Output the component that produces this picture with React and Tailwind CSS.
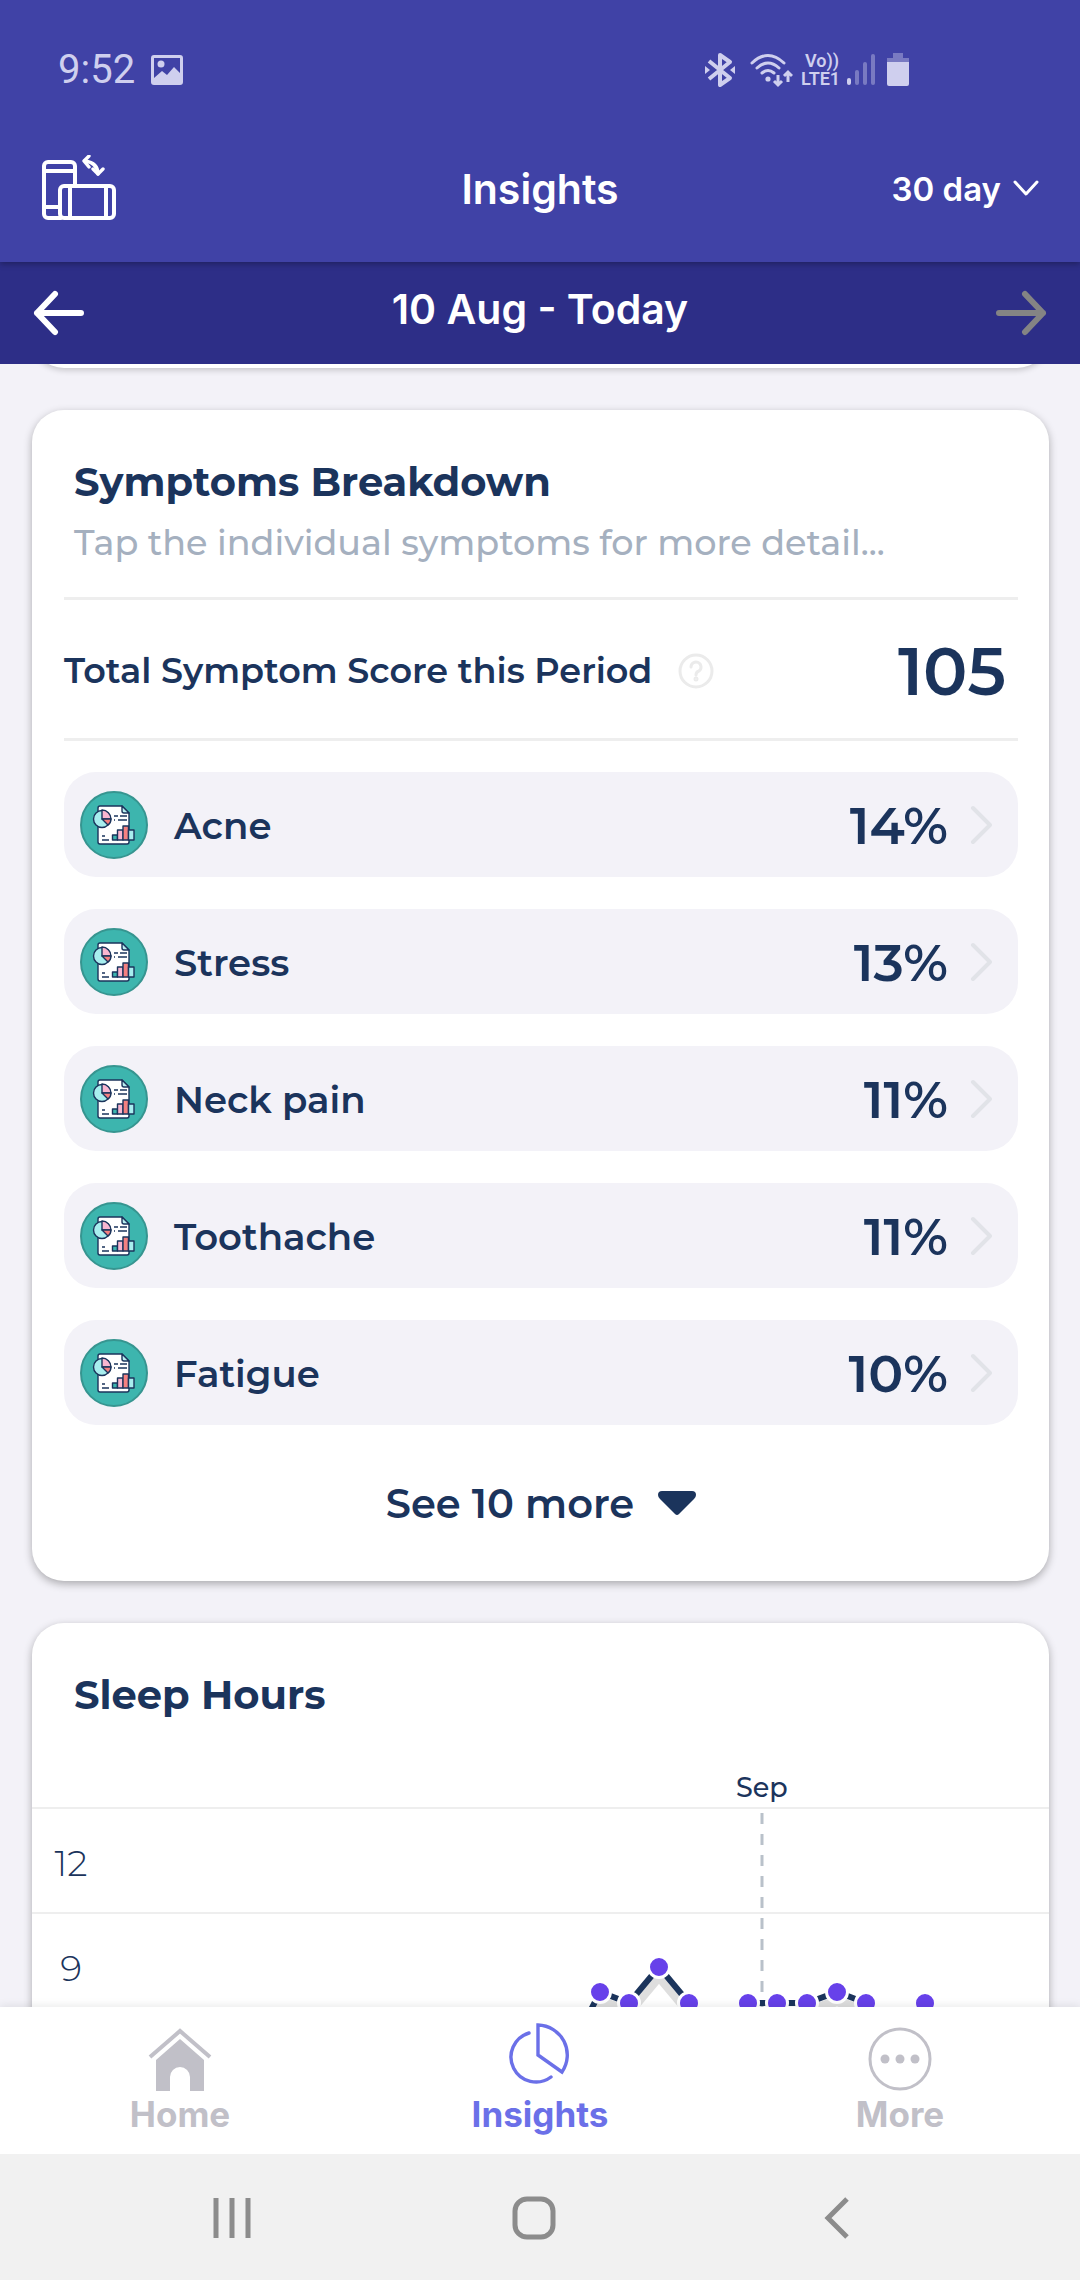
/**
 * Insights screen - symptom breakdown and sleep chart for the selected period
 */

const SYMPTOMS = [
  { name: "Acne", share: 14 },
  { name: "Stress", share: 13 },
  { name: "Neck pain", share: 11 },
  { name: "Toothache", share: 11 },
  { name: "Fatigue", share: 10 },
];

// sleep series, one run per unbroken stretch of days (chart coordinates)
const SLEEP_RUNS = [
  [[538, 244], [568, 185], [597, 196], [627, 160], [657, 196]],
  [[716, 196], [745, 196], [775, 196], [805, 185], [834, 196]],
  [[893, 196]],
];

function StatusBar() {
  return (
    <div className="flex items-center justify-between pt-[50px] pl-[58px] pr-[171px] h-[90px] text-[#cfcfee]">
      <div className="flex items-center gap-4">
        <span className="font-['Roboto'] text-[40px] leading-10">9:52</span>
        <svg width="32" height="32" viewBox="0 0 32 32" fill="currentColor">
          <path fillRule="evenodd" d="M3 1h26a3 3 0 0 1 3 3v24a3 3 0 0 1-3 3H3a3 3 0 0 1-3-3V4a3 3 0 0 1 3-3zm0 3v20l8-7 5 4 7-8 6 6V4z" />
          <circle cx="10" cy="10" r="3.5" />
        </svg>
      </div>
      <div className="flex items-center">
        <svg width="30" height="36" viewBox="0 0 30 36" fill="none" stroke="currentColor" strokeWidth="4">
          <path d="M4 9l21 17-10 7V3l10 7L4 27" strokeLinejoin="round" />
          <path d="M0 14l5 4-5 4zM30 14l-5 4 5 4z" fill="currentColor" stroke="none" />
        </svg>
        <svg className="ml-[14px]" width="44" height="36" viewBox="0 0 44 36" fill="none" stroke="currentColor" strokeWidth="3" strokeLinecap="round">
          <path d="M3 11Q19-4 35 11M8 16q11-10 22 0M13 21q6-5 12 0" />
          <circle cx="19" cy="27" r="2.6" fill="currentColor" stroke="none" />
          <path d="M29 23v10m-4-4l4 4 4-4M39 30V20m-4 4l4-4 4 4" strokeLinecap="butt" />
        </svg>
        <div className="ml-2 flex w-[38px] flex-col font-['Roboto'] font-semibold text-[18px] leading-[18px]">
          <span className="pl-1">Vo))</span>
          <span>LTE1</span>
        </div>
        <svg className="ml-2" width="28" height="34" viewBox="0 0 28 34" fill="currentColor">
          <rect x="0" y="25" width="4" height="7" rx="2" />
          <g opacity="0.4">
            <rect x="8" y="17" width="4" height="15" rx="2" />
            <rect x="16" y="9" width="4" height="23" rx="2" />
            <rect x="24" y="1" width="4" height="31" rx="2" />
          </g>
        </svg>
        <svg className="ml-3" width="22" height="34" viewBox="0 0 22 34" fill="currentColor">
          <path opacity="0.4" d="M6 0h10v5h6v5H0V5h6z" />
          <path d="M0 9h22v22a2 2 0 0 1-2 2H2a2 2 0 0 1-2-2z" />
        </svg>
      </div>
    </div>
  );
}

function RotateIcon() {
  return (
    <svg width="76" height="70" viewBox="0 0 76 70" fill="none" stroke="#fff" strokeWidth="4" strokeLinejoin="round" strokeLinecap="round">
      <path d="M20 63H7a4 4 0 0 1-4-4V11a4 4 0 0 1 4-4h23a4 4 0 0 1 4 4v19M3 16h30M3 52h14" />
      <rect x="19" y="31" width="54" height="32" rx="4" />
      <path d="M29 32v31M65 32v31" />
      <path d="M44 6q13 2 13 13" strokeWidth="3.4" />
      <path d="M48 1l-5 5 5 6M52 14l5 5 5-5" strokeWidth="3.4" />
    </svg>
  );
}

function ReportIcon() {
  return (
    <svg className="shrink-0" width="68" height="68" viewBox="0 0 68 68" stroke="#1b345c" strokeWidth="1.4" strokeLinejoin="round">
      <circle cx="34" cy="34" r="33" fill="#3db5ae" stroke="#369590" strokeWidth="2" />
      <path d="M20 15h22l7 7v29a2 2 0 0 1-2 2H20a2 2 0 0 1-2-2V17a2 2 0 0 1 2-2z" fill="#fff" />
      <path d="M42 15v5a2 2 0 0 0 2 2h5z" fill="#b9eef0" />
      <circle cx="22" cy="28" r="8.5" fill="#a8eeee" />
      <path d="M22 28V19a9 9 0 0 1 9 9z" fill="#f9b6d0" />
      <path d="M22 28h9q0 4-3 6z" fill="#f48080" />
      <path d="M34 25h4m2 0h7M34 29h1m3 0h9M22 45h3M22 49h7" fill="none" />
      <rect x="32.5" y="44" width="5" height="5" fill="#3db5ae" />
      <rect x="37.5" y="39" width="5.5" height="10" fill="#f9b6d0" />
      <rect x="43" y="35" width="5.5" height="14" fill="#f48080" />
      <rect x="48.5" y="39" width="5.5" height="10" fill="#a8eeee" />
    </svg>
  );
}

function SymptomRow({ name, share }) {
  return (
    <button className="flex h-[105px] w-full items-center rounded-[32px] bg-[#f3f2f8] pl-4 pr-[26px] text-left">
      <ReportIcon />
      <span className="ml-[26px] flex-1 pt-[2px] text-[37px] font-semibold">{name}</span>
      <span className="pt-[2px] text-[52px] font-semibold">{share}%</span>
      <svg className="ml-[22px]" width="22" height="40" viewBox="0 0 22 40" fill="none" stroke="#e1e3e8" strokeWidth="4" strokeLinecap="round" strokeLinejoin="round">
        <path d="M3 3l17 17L3 37" />
      </svg>
    </button>
  );
}

function SleepChart() {
  return (
    <svg className="absolute left-0 top-0" width="1016" height="300" viewBox="0 0 1016 300" fill="none">
      <path d="M730 6v260" stroke="#b9c1ca" strokeWidth="3" strokeDasharray="11 10" />
      {SLEEP_RUNS.map((run, i) => {
        const points = run.map((p) => p.join(",")).join(" ");
        return (
          <g key={i}>
            <polyline points={points} stroke="#dedede" strokeWidth="10" transform="translate(0 9)" strokeLinejoin="round" />
            <polyline points={points} stroke="#1b345c" strokeWidth="6" />
            {run.map(([x, y]) => (
              <circle key={x} cx={x} cy={y} r="10.5" fill="#6741ea" stroke="#fff" strokeWidth="3" />
            ))}
          </g>
        );
      })}
    </svg>
  );
}

function Tab({ label, active, children }) {
  return (
    <a href="#" className={`flex flex-1 flex-col items-center gap-1 pt-3 ${active ? "text-[#6b70e8]" : "text-[#c1c0c8]"}`}>
      {children}
      <span className="text-[35px] leading-[38px] font-bold">{label}</span>
    </a>
  );
}

export default function App() {
  return (
    <div className="flex h-screen flex-col overflow-hidden bg-[#f3f2f8] font-['Montserrat','Inter',sans-serif] text-[#1b345c]">
      <header className="relative z-10 bg-[#4042a6] font-['Inter'] text-white shadow-[0_2px_6px_rgba(0,0,0,0.3)]">
        <StatusBar />
        <div className="grid h-[172px] grid-cols-3 items-center px-[41px] pt-7">
          <button aria-label="Rotate screen" className="justify-self-start">
            <RotateIcon />
          </button>
          <h1 className="text-center text-[41px] font-semibold">Insights</h1>
          <button className="flex items-center gap-3 justify-self-end text-[33px] font-semibold">
            30 day
            <svg width="26" height="20" viewBox="0 0 26 20" fill="none" stroke="#fff" strokeWidth="3" strokeLinecap="round" strokeLinejoin="round">
              <path d="M2 2l11 12L24 2" />
            </svg>
          </button>
        </div>
      </header>

      <div className="flex h-[102px] shrink-0 items-center justify-between bg-[#2d2e87] px-8 font-['Inter'] text-white">
        <button aria-label="Previous period">
          <svg width="54" height="46" viewBox="0 0 54 46" fill="none" stroke="#fff" strokeWidth="6" strokeLinecap="round" strokeLinejoin="round">
            <path d="M23 4L5 23l18 19M5 23h44" />
          </svg>
        </button>
        <h2 className="pb-[6px] text-[41px] font-semibold">10 Aug - Today</h2>
        <button aria-label="Next period">
          <svg width="54" height="46" viewBox="0 0 54 46" fill="none" stroke="#848484" strokeWidth="6" strokeLinecap="round" strokeLinejoin="round">
            <path d="M31 4l18 19-18 19M49 23H5" />
          </svg>
        </button>
      </div>

      <main className="flex min-h-0 flex-1 flex-col gap-[42px] overflow-hidden pl-8 pr-[31px]">
        {/* tail of the card scrolled off the top */}
        <div className="-mt-[60px] h-16 shrink-0 rounded-[32px] bg-white shadow-[0_2px_6px_rgba(0,0,0,0.2)]" />

        <section className="shrink-0 rounded-[32px] bg-white pl-8 pr-[31px] pb-12 shadow-[0_3px_8px_rgba(0,0,0,0.3)]">
          <div className="border-b-[3px] border-[#eeeeee] px-[10px] pt-12 pb-[29px]">
            <h2 className="text-[40px] leading-12 font-bold">Symptoms Breakdown</h2>
            <p className="mt-3 text-[35px] leading-[50px] font-medium text-[#a5b0bf]">Tap the individual symptoms for more detail...</p>
          </div>
          <div className="flex h-[141px] items-center border-b-[3px] border-[#eeeeee] pt-1 pr-3">
            <h3 className="text-[35px] font-semibold">Total Symptom Score this Period</h3>
            <button aria-label="About the score" className="ml-[26px]">
              <svg width="36" height="36" viewBox="0 0 36 36" fill="none" stroke="#ebebeb" strokeWidth="3" strokeLinecap="round">
                <circle cx="18" cy="18" r="16" />
                <path d="M13 14a5 5 0 1 1 8 4q-3 1-3 4" />
                <circle cx="18" cy="26" r="1" />
              </svg>
            </button>
            <strong className="ml-auto text-[66px] font-semibold">105</strong>
          </div>
          <div className="mt-[31px] flex flex-col gap-8">
            {SYMPTOMS.map((s) => (
              <SymptomRow key={s.name} {...s} />
            ))}
          </div>
          <button className="mx-auto mt-12 flex h-[60px] items-center gap-6 pt-[2px] text-[40px] font-semibold">
            See 10 more
            <svg width="38" height="28" viewBox="0 0 38 28" fill="#1b345c">
              <path d="M4 1h30q4 0 4 4 0 2-2 4L21 24q-2 2-4 0L2 9Q0 7 0 5q0-4 4-4z" />
            </svg>
          </button>
        </section>

        <section className="shrink-0 rounded-[32px] bg-white pt-12 pb-24 shadow-[0_3px_8px_rgba(0,0,0,0.3)]">
          <h2 className="px-[42px] text-[40px] leading-12 font-bold">Sleep Hours</h2>
          <div className="mt-12 h-10 pl-[704px] text-[27px] leading-[42px] font-medium">Sep</div>
          <div className="relative">
            <SleepChart />
            {[12, 9].map((hours) => (
              <div key={hours} className="flex h-[105px] items-center border-t-2 border-[#eeeeee] pt-1">
                <span className="w-[78px] text-center text-[36px] font-light">{hours}</span>
              </div>
            ))}
          </div>
        </section>
      </main>

      <nav className="relative z-10 flex h-[147px] shrink-0 bg-white font-['Inter'] shadow-[0_-2px_8px_rgba(0,0,0,0.08)]">
        <Tab label="Home">
          <svg width="64" height="72" viewBox="0 0 64 72" fill="currentColor">
            <path d="M2 38L32 12l30 26" fill="none" stroke="currentColor" strokeWidth="4" />
            <path d="M32 20l24 21v31H42V58a10 10 0 0 0-20 0v14H8V41z" />
          </svg>
        </Tab>
        <Tab label="Insights" active>
          <svg width="64" height="72" viewBox="0 0 64 72" fill="none" stroke="currentColor" strokeWidth="3.4" strokeLinecap="round">
            <path d="M30 6a30 30 0 0 1 24 47L30 36z" />
            <path d="M21 14a25 25 0 1 0 22 44" />
          </svg>
        </Tab>
        <Tab label="More">
          <svg width="64" height="72" viewBox="0 0 64 72" fill="currentColor">
            <circle cx="32" cy="40" r="30" fill="none" stroke="currentColor" strokeWidth="3" />
            <circle cx="17" cy="40" r="4.5" />
            <circle cx="32" cy="40" r="4.5" />
            <circle cx="47" cy="40" r="4.5" />
          </svg>
        </Tab>
      </nav>

      <footer className="relative z-10 flex h-[126px] shrink-0 items-center justify-between bg-[#f1f1f1] pt-[2px] pl-[212px] pr-[230px]">
        <button aria-label="Recents">
          <svg width="40" height="44" viewBox="0 0 40 44" stroke="#8c8c8c" strokeWidth="5">
            <path d="M4 2v40M20 2v40M36 2v40" />
          </svg>
        </button>
        <button aria-label="Home screen">
          <svg width="44" height="44" viewBox="0 0 44 44" fill="none" stroke="#8c8c8c" strokeWidth="5">
            <rect x="3" y="3" width="38" height="38" rx="12" />
          </svg>
        </button>
        <button aria-label="Back">
          <svg width="34" height="44" viewBox="-8 0 34 44" fill="none" stroke="#8c8c8c" strokeWidth="5">
            <path d="M23 3L4 22l19 19" />
          </svg>
        </button>
      </footer>
    </div>
  );
}
